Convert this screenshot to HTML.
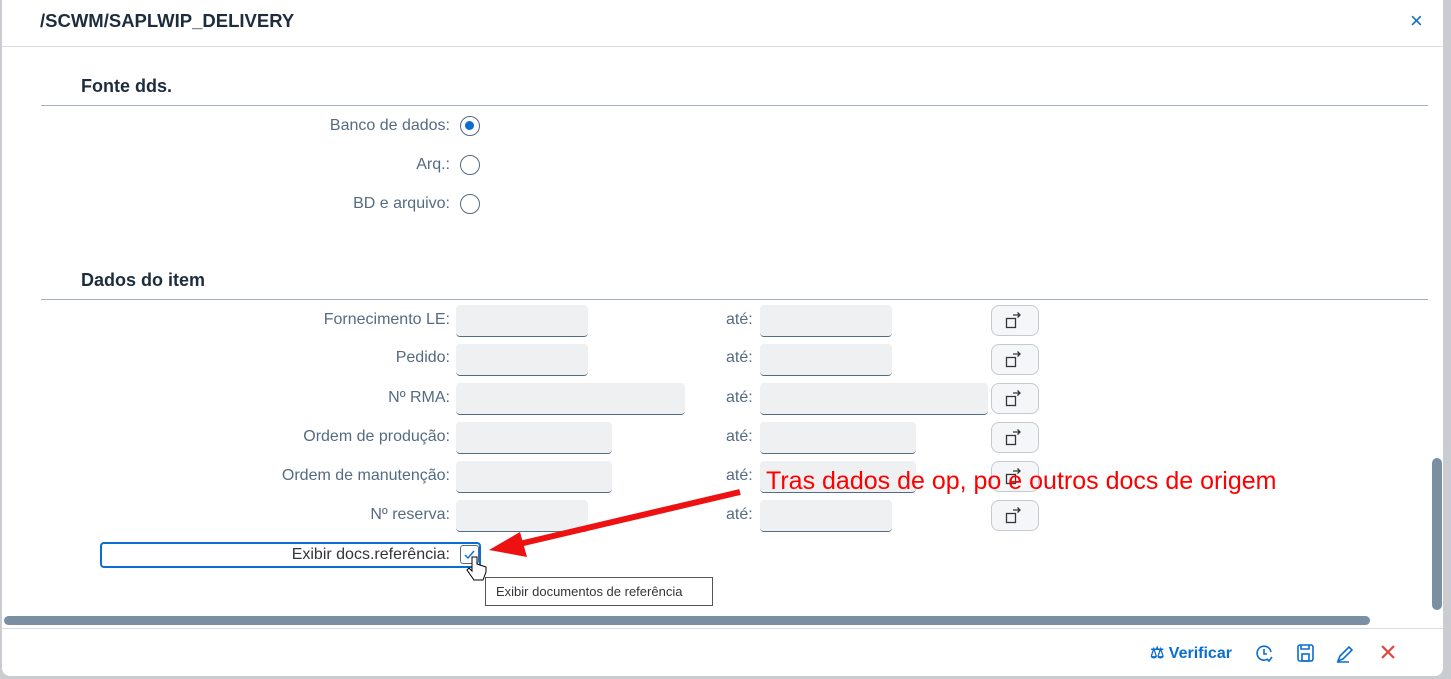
<!DOCTYPE html>
<html><head><meta charset="utf-8"><style>
*{box-sizing:border-box;margin:0;padding:0}
body{width:1451px;height:679px;background:#c9ccd0;font-family:"Liberation Sans",sans-serif;position:relative;overflow:hidden}
.dlg{position:absolute;left:2px;top:0;width:1441px;height:676px;background:#fff;border-radius:0 0 8px 8px}
.abs{position:absolute}
.lbl{position:absolute;right:1001px;font-size:16px;color:#556b82;text-align:right;white-space:nowrap}
.ate{position:absolute;left:726px;font-size:16px;color:#556b82}
.inp{position:absolute;height:32px;background:#eff0f1;border-radius:4px;border-bottom:1px solid #556b82}
.btn{position:absolute;left:991px;width:48px;height:31px;border:1px solid #c5cad0;border-radius:8px;background:#f5f6f7}
.rad{position:absolute;left:460px;width:20px;height:20px;border:1.5px solid #556b82;border-radius:50%;background:#fff}
h3{position:absolute;left:81px;font-size:18px;color:#1d2d3e;font-weight:bold}
.hr{position:absolute;left:41px;width:1387px;height:1px;background:#a8b2bd}
</style></head><body>
<div class="dlg">
</div>
<div class="abs" style="left:40px;top:10px;font-size:18.5px;font-weight:bold;color:#1d2d3e">/SCWM/SAPLWIP_DELIVERY</div>
<div class="abs" style="left:1410px;top:8px;font-size:22px;color:#0a6ed1">×</div>
<div class="abs" style="left:2px;top:46px;width:1441px;height:1px;background:#d9dde1"></div>
<h3 style="top:76px">Fonte dds.</h3>
<div class="hr" style="top:105px"></div>
<div class="lbl" style="top:117px">Banco de dados:</div>
<div class="rad" style="top:116px"><div style="position:absolute;left:4px;top:4px;width:9px;height:9px;border-radius:50%;background:#0a6ed1"></div></div>
<div class="lbl" style="top:156px">Arq.:</div><div class="rad" style="top:155px"></div>
<div class="lbl" style="top:195px">BD e arquivo:</div><div class="rad" style="top:194px"></div>
<h3 style="top:270px">Dados do item</h3>
<div class="hr" style="top:299px"></div>

<div class="lbl" style="top:311px">Fornecimento LE:</div><div class="inp" style="left:456px;top:305px;width:132px"></div>
<div class="ate" style="top:311px">até:</div><div class="inp" style="left:760px;top:305px;width:132px"></div>
<div class="lbl" style="top:349px">Pedido:</div><div class="inp" style="left:456px;top:344px;width:132px"></div>
<div class="ate" style="top:349px">até:</div><div class="inp" style="left:760px;top:344px;width:132px"></div>
<div class="lbl" style="top:389px">Nº RMA:</div><div class="inp" style="left:456px;top:383px;width:229px"></div>
<div class="ate" style="top:389px">até:</div><div class="inp" style="left:760px;top:383px;width:228px"></div>
<div class="lbl" style="top:428px">Ordem de produção:</div><div class="inp" style="left:456px;top:422px;width:156px"></div>
<div class="ate" style="top:428px">até:</div><div class="inp" style="left:760px;top:422px;width:156px"></div>
<div class="lbl" style="top:467px">Ordem de manutenção:</div><div class="inp" style="left:456px;top:461px;width:156px"></div>
<div class="ate" style="top:467px">até:</div><div class="inp" style="left:760px;top:461px;width:156px"></div>
<div class="lbl" style="top:506px">Nº reserva:</div><div class="inp" style="left:456px;top:500px;width:132px"></div>
<div class="ate" style="top:506px">até:</div><div class="inp" style="left:760px;top:500px;width:132px"></div>

<div class="btn" style="top:305px"></div><div class="btn" style="top:344px"></div><div class="btn" style="top:383px"></div><div class="btn" style="top:422px"></div><div class="btn" style="top:461px"></div><div class="btn" style="top:500px"></div>
<svg class="abs" style="left:0;top:0" width="1451" height="679">
<g fill="none" stroke="#32363a" stroke-width="1.3">
<g id="ic"><rect x="1006.5" y="318.5" width="9" height="9"/><path d="M1013 315h7M1017.5 312.5l2.5 2.5-2.5 2.5M1020 315"/></g>
<use href="#ic" y="39"/><use href="#ic" y="78"/><use href="#ic" y="117"/><use href="#ic" y="156"/><use href="#ic" y="195"/>
</g>
</svg>

<div class="abs" style="left:100px;top:542px;width:381px;height:26px;border:2px solid #0a6ed1;border-radius:4px"></div>
<div class="lbl" style="top:546px;color:#32363a">Exibir docs.referência:</div>
<div class="abs" style="left:460px;top:545px;width:19px;height:19px;border:1.5px solid #556b82;border-radius:3px;background:#fff"></div>
<svg class="abs" style="left:462px;top:547px" width="16" height="16"><path d="M3 8l3 3 6-7" stroke="#0a6ed1" stroke-width="1.4" fill="none"/></svg>
<svg class="abs" style="left:466px;top:555px" width="24" height="30"><path d="M6 2v14l-3-3-2 2 7 10h9l3-8v-5l-3-1-3-1-3-1V2z" fill="#fff" stroke="#000" stroke-width="1"/></svg>
<div class="abs" style="left:485px;top:577px;width:228px;height:29px;border:1px solid #555;background:#fff;font-size:13px;color:#32363a;padding:6px 0 0 10px">Exibir documentos de referência</div>

<div class="abs" style="left:766px;top:467px;font-size:25px;color:#ff0000;white-space:nowrap">Tras dados de op, po e outros docs de origem</div>
<svg class="abs" style="left:0;top:0" width="1451" height="679"><path d="M740 492L515 545" stroke="#ee1111" stroke-width="6"/><path d="M489 550L520 532L527 557Z" fill="#ee1111"/></svg>

<div class="abs" style="left:4px;top:616px;width:1366px;height:9px;border-radius:5px;background:#7b8fa3"></div>
<div class="abs" style="left:1432px;top:458px;width:10px;height:152px;border-radius:5px;background:#7b8fa3"></div>
<div class="abs" style="left:2px;top:628px;width:1441px;height:1px;background:#d9dde1"></div>
<div class="abs" style="left:1150px;top:643px;font-size:16px;font-weight:bold;color:#0a6ed1">⚖ Verificar</div>
<svg class="abs" style="left:1255px;top:643px" width="150" height="22" fill="none" stroke="#0a6ed1" stroke-width="1.6">
<path d="M16 9a7 7 0 1 0-3 7"/><path d="M9 6v5h3M12 16l2 2 3-4"/>
<rect x="43" y="2" width="15" height="16" rx="2"/><rect x="47" y="11" width="7" height="7"/><path d="M46 2v4h8V2"/>
<path d="M83 18l2-5 9-9 3 3-9 9z M82 19h12"/>
<path d="M127 3l12 12M139 3L127 15" stroke="#e0463e" stroke-width="2.2"/>
</svg>
</body></html>
